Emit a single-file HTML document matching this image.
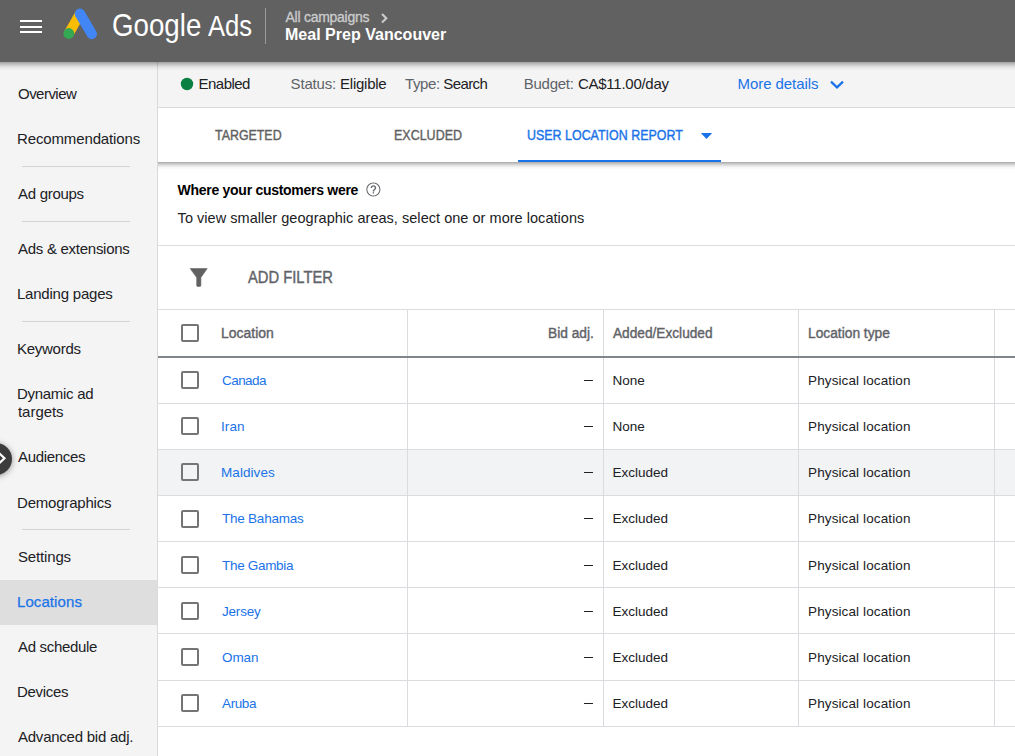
<!DOCTYPE html>
<html>
<head>
<meta charset="utf-8">
<style>
html,body{margin:0;padding:0;width:1015px;height:756px;overflow:hidden;background:#fff;}
body{position:relative;font-family:"Liberation Sans",sans-serif;}
.t{position:absolute;white-space:nowrap;line-height:1;}
.abs{position:absolute;}
#side{left:0;top:62px;width:157px;height:694px;background:#f4f4f4;border-right:1px solid #dadada;}
.sdiv{position:absolute;left:22px;width:108px;height:1px;background:#d4d4d4;}
#status{left:158px;top:62px;width:857px;height:45px;background:#f4f4f4;border-bottom:1px solid #dadada;}
#tabs{left:158px;top:108px;width:857px;height:54px;background:#fff;}
#tabshadow{left:158px;top:162px;width:857px;height:8px;background:linear-gradient(#a6a6a6 0,#c4c4c4 1.5px,#e2e2e2 3.5px,#f6f6f6 5.5px,#fff 8px);}
#header{left:0;top:0;width:1015px;height:62px;background:#616161;z-index:5;}
#hshadow{left:-30px;top:0;width:1075px;height:62px;background:#616161;box-shadow:0 2px 6px rgba(0,0,0,.45);z-index:5;}
.hline{position:absolute;height:1px;background:#dadce0;}
.vline{position:absolute;width:1px;background:#dadce0;}
.cb{position:absolute;left:181px;width:14px;height:14px;border:2px solid #757575;border-radius:2px;}
</style>
</head>
<body>
<!-- sidebar -->
<div id="side" class="abs">
  <div class="abs" style="left:0;top:518px;width:157px;height:45px;background:#dedede"></div>
  <div class="sdiv" style="top:104px"></div>
  <div class="sdiv" style="top:159px"></div>
  <div class="sdiv" style="top:259px"></div>
  <div class="sdiv" style="top:467px"></div>
</div>
<!-- status bar -->
<div id="status" class="abs"></div>
<svg class="abs" style="left:180px;top:77px" width="14" height="14"><circle cx="7" cy="7" r="6.2" fill="#0b8043"/></svg>
<svg class="abs" style="left:826px;top:77px" width="22" height="14"><path d="M5 4.6 L11 10.4 L17 4.6" fill="none" stroke="#1a73e8" stroke-width="2.2"/></svg>
<!-- tabs -->
<div id="tabs" class="abs"></div>
<div id="tabshadow" class="abs"></div>
<div class="abs" style="left:518px;top:160px;width:203px;height:2px;background:#1a73e8"></div>
<svg class="abs" style="left:699px;top:131px" width="14" height="10"><path d="M1.8 2 L13.2 2 L7.5 8 Z" fill="#1a73e8"/></svg>
<!-- section -->
<svg class="abs" style="left:364.6px;top:180.5px" width="17" height="17" viewBox="0 0 24.3 24.3"><g transform="scale(1)"><path fill="#5f6368" d="M11 18h2v-2h-2v2zm1-16C6.48 2 2 6.48 2 12s4.48 10 10 10 10-4.48 10-10S17.520 2 12 2zm0 18.6c-4.75 0-8.6-3.85-8.6-8.6s3.85-8.6 8.6-8.6 8.6 3.85 8.6 8.6-3.85 8.6-8.6 8.6zm0-14.6c-2.21 0-4 1.79-4 4h2c0-1.1.9-2 2-2s2 .9 2 2c0 2-3 1.750-3 5h2c0-2.25 3-2.5 3-5 0-2.21-1.79-4-4-4z"/></g></svg>
<div class="hline" style="left:158px;top:245px;width:857px"></div>
<svg class="abs" style="left:188px;top:266px" width="22" height="22"><path d="M2.2 2.6 L19.2 2.6 L12.9 11.6 L12.9 19.4 Q12.9 20.4 11.9 20.4 L9.7 20.4 Q8.7 20.4 8.7 19.4 L8.7 11.6 Z" fill="#616161" stroke="#616161" stroke-width="0.6" stroke-linejoin="round"/></svg>
<div class="hline" style="left:158px;top:309px;width:857px"></div>
<!-- table -->
<div class="abs" style="left:158px;top:356px;width:857px;height:2px;background:#80868b"></div>
<div class="abs" style="left:158px;top:450px;width:857px;height:45px;background:#f1f3f4"></div>
<div class="hline" style="left:158px;top:403px;width:857px"></div>
<div class="hline" style="left:158px;top:449px;width:857px"></div>
<div class="hline" style="left:158px;top:495px;width:857px"></div>
<div class="hline" style="left:158px;top:541px;width:857px"></div>
<div class="hline" style="left:158px;top:587px;width:857px"></div>
<div class="hline" style="left:158px;top:633px;width:857px"></div>
<div class="hline" style="left:158px;top:680px;width:857px"></div>
<div class="hline" style="left:158px;top:726px;width:857px"></div>
<div class="vline" style="left:407px;top:310px;height:46px"></div>
<div class="vline" style="left:603px;top:310px;height:46px"></div>
<div class="vline" style="left:798px;top:310px;height:46px"></div>
<div class="vline" style="left:994px;top:310px;height:46px"></div>
<div class="vline" style="left:407px;top:358px;height:368px"></div>
<div class="vline" style="left:603px;top:358px;height:368px"></div>
<div class="vline" style="left:798px;top:358px;height:368px"></div>
<div class="vline" style="left:994px;top:358px;height:368px"></div>
<div class="cb" style="top:324px"></div>
<div class="cb" style="top:371px"></div>
<div class="cb" style="top:417px"></div>
<div class="cb" style="top:463px"></div>
<div class="cb" style="top:510px"></div>
<div class="cb" style="top:556px"></div>
<div class="cb" style="top:602px"></div>
<div class="cb" style="top:648px"></div>
<div class="cb" style="top:694px"></div>
<div class="abs" style="left:583.5px;top:380px;width:9.5px;height:1px;background:#202124"></div>
<div class="abs" style="left:583.5px;top:426px;width:9.5px;height:1px;background:#202124"></div>
<div class="abs" style="left:583.5px;top:472px;width:9.5px;height:1px;background:#202124"></div>
<div class="abs" style="left:583.5px;top:518px;width:9.5px;height:1px;background:#202124"></div>
<div class="abs" style="left:583.5px;top:565px;width:9.5px;height:1px;background:#202124"></div>
<div class="abs" style="left:583.5px;top:611px;width:9.5px;height:1px;background:#202124"></div>
<div class="abs" style="left:583.5px;top:657px;width:9.5px;height:1px;background:#202124"></div>
<div class="abs" style="left:583.5px;top:703px;width:9.5px;height:1px;background:#202124"></div>
<!-- header -->
<div id="hshadow" class="abs"></div>
<div id="header" class="abs">
  <div class="abs" style="left:20px;top:20px;width:22px;height:2px;background:#fff"></div>
  <div class="abs" style="left:20px;top:25.5px;width:22px;height:2px;background:#fff"></div>
  <div class="abs" style="left:20px;top:31px;width:22px;height:2px;background:#fff"></div>
  <svg class="abs" style="left:58px;top:4px" width="42" height="42">
    <line x1="22" y1="9.8" x2="10.8" y2="29.5" stroke="#fbbc04" stroke-width="10" stroke-linecap="butt"/>
    <line x1="22" y1="9.8" x2="33.8" y2="30" stroke="#4285f4" stroke-width="10.4" stroke-linecap="round"/>
    <circle cx="10.8" cy="29.5" r="5.4" fill="#34a853"/>
  </svg>
  <div class="abs" style="left:265px;top:8px;width:1px;height:36px;background:#9a9a9a"></div>
  <svg class="abs" style="left:378px;top:11px" width="12" height="14"><path d="M4 3 L8.3 7.2 L4 11.4" fill="none" stroke="#cccccc" stroke-width="2.1"/></svg>
</div>
<!-- Audiences float -->
<div class="abs" style="left:-20px;top:442.5px;width:32px;height:32px;border-radius:50%;background:#3c3c3c;box-shadow:0 1px 6px rgba(0,0,0,.4);z-index:4"></div>
<svg class="abs" style="left:0;top:450px;z-index:6" width="10" height="16"><path d="M-1 3 L4.5 8.2 L-1 13.4" fill="none" stroke="#fff" stroke-width="2.2"/></svg>
<div style="position:absolute;left:0;top:0;z-index:10">
<span class="t" style="left:112.09px;top:9.50px;font-size:30.5px;font-weight:400;color:#ffffff;letter-spacing:0.000px;transform:scaleX(0.9078);transform-origin:0 0;">Google</span>
<span class="t" style="left:207.50px;top:10.50px;font-size:29.5px;font-weight:400;color:#ffffff;letter-spacing:0.000px;transform:scaleX(0.8686);transform-origin:0 0;">Ads</span>
<span class="t" style="left:285.50px;top:9.60px;font-size:14px;font-weight:400;color:#cccccc;letter-spacing:-0.263px;-webkit-text-stroke:0.3px #cccccc;">All campaigns</span>
<span class="t" style="left:285.00px;top:26.70px;font-size:16px;font-weight:700;color:#ffffff;letter-spacing:0.015px;">Meal Prep Vancouver</span>
<span class="t" style="left:18.00px;top:86.00px;font-size:15px;font-weight:400;color:#202124;letter-spacing:-0.526px;">Overview</span>
<span class="t" style="left:17.00px;top:131.00px;font-size:15px;font-weight:400;color:#202124;letter-spacing:-0.133px;">Recommendations</span>
<span class="t" style="left:18.00px;top:186.00px;font-size:15px;font-weight:400;color:#202124;letter-spacing:-0.285px;">Ad groups</span>
<span class="t" style="left:18.00px;top:241.00px;font-size:15px;font-weight:400;color:#202124;letter-spacing:-0.273px;">Ads &amp; extensions</span>
<span class="t" style="left:17.00px;top:286.00px;font-size:15px;font-weight:400;color:#202124;letter-spacing:-0.219px;">Landing pages</span>
<span class="t" style="left:17.00px;top:341.00px;font-size:15px;font-weight:400;color:#202124;letter-spacing:-0.266px;">Keywords</span>
<span class="t" style="left:17.00px;top:386.00px;font-size:15px;font-weight:400;color:#202124;letter-spacing:-0.295px;">Dynamic ad</span>
<span class="t" style="left:18.00px;top:404.00px;font-size:15px;font-weight:400;color:#202124;letter-spacing:-0.043px;">targets</span>
<span class="t" style="left:18.00px;top:449.00px;font-size:15px;font-weight:400;color:#202124;letter-spacing:-0.306px;">Audiences</span>
<span class="t" style="left:17.00px;top:494.50px;font-size:15px;font-weight:400;color:#202124;letter-spacing:-0.201px;">Demographics</span>
<span class="t" style="left:18.00px;top:549.00px;font-size:15px;font-weight:400;color:#202124;letter-spacing:-0.157px;">Settings</span>
<span class="t" style="left:17.00px;top:593.60px;font-size:15px;font-weight:400;color:#1a73e8;letter-spacing:0.086px;-webkit-text-stroke:0.25px #1a73e8;">Locations</span>
<span class="t" style="left:18.00px;top:639.00px;font-size:15px;font-weight:400;color:#202124;letter-spacing:-0.312px;">Ad schedule</span>
<span class="t" style="left:17.00px;top:684.00px;font-size:15px;font-weight:400;color:#202124;letter-spacing:-0.308px;">Devices</span>
<span class="t" style="left:18.00px;top:728.50px;font-size:15px;font-weight:400;color:#202124;letter-spacing:-0.237px;">Advanced bid adj.</span>
<span class="t" style="left:198.60px;top:76.00px;font-size:15px;font-weight:400;color:#202124;letter-spacing:-0.551px;">Enabled</span>
<span class="t" style="left:290.60px;top:76.00px;font-size:15px;font-weight:400;color:#5f6368;letter-spacing:-0.187px;">Status:</span>
<span class="t" style="left:340.10px;top:76.00px;font-size:15px;font-weight:400;color:#202124;letter-spacing:-0.260px;">Eligible</span>
<span class="t" style="left:405.00px;top:76.00px;font-size:15px;font-weight:400;color:#5f6368;letter-spacing:-0.380px;">Type:</span>
<span class="t" style="left:443.30px;top:76.00px;font-size:15px;font-weight:400;color:#202124;letter-spacing:-0.597px;">Search</span>
<span class="t" style="left:523.70px;top:76.00px;font-size:15px;font-weight:400;color:#5f6368;letter-spacing:-0.240px;">Budget:</span>
<span class="t" style="left:578.00px;top:76.00px;font-size:15px;font-weight:400;color:#202124;letter-spacing:-0.269px;">CA$11.00/day</span>
<span class="t" style="left:737.50px;top:76.00px;font-size:15px;font-weight:400;color:#1a73e8;letter-spacing:-0.064px;">More details</span>
<span class="t" style="left:215.10px;top:128.00px;font-size:14px;font-weight:400;color:#616161;letter-spacing:0.000px;transform:scaleX(0.8857);transform-origin:0 0;-webkit-text-stroke:0.4px #616161;">TARGETED</span>
<span class="t" style="left:393.71px;top:128.00px;font-size:14px;font-weight:400;color:#616161;letter-spacing:0.000px;transform:scaleX(0.8918);transform-origin:0 0;-webkit-text-stroke:0.4px #616161;">EXCLUDED</span>
<span class="t" style="left:526.81px;top:128.00px;font-size:14px;font-weight:400;color:#1a73e8;letter-spacing:0.000px;transform:scaleX(0.8888);transform-origin:0 0;-webkit-text-stroke:0.4px #1a73e8;">USER LOCATION REPORT</span>
<span class="t" style="left:177.60px;top:183.00px;font-size:14px;font-weight:700;color:#000000;letter-spacing:-0.280px;">Where your customers were</span>
<span class="t" style="left:177.60px;top:210.70px;font-size:14.5px;font-weight:400;color:#202124;letter-spacing:0.034px;">To view smaller geographic areas, select one or more locations</span>
<span class="t" style="left:247.80px;top:269.60px;font-size:16px;font-weight:400;color:#5f6368;letter-spacing:0.000px;transform:scaleX(0.9214);transform-origin:0 0;-webkit-text-stroke:0.4px #5f6368;">ADD FILTER</span>
<span class="t" style="left:221.00px;top:326.00px;font-size:14px;font-weight:400;color:#5f6368;letter-spacing:0.000px;transform:scaleX(0.9972);transform-origin:0 0;-webkit-text-stroke:0.4px #5f6368;">Location</span>
<span class="t" style="left:548.02px;top:326.00px;font-size:14px;font-weight:400;color:#5f6368;letter-spacing:0.000px;transform:scaleX(0.9820);transform-origin:0 0;-webkit-text-stroke:0.4px #5f6368;">Bid adj.</span>
<span class="t" style="left:613.20px;top:326.00px;font-size:14px;font-weight:400;color:#5f6368;letter-spacing:0.000px;transform:scaleX(0.9765);transform-origin:0 0;-webkit-text-stroke:0.4px #5f6368;">Added/Excluded</span>
<span class="t" style="left:807.92px;top:326.00px;font-size:14px;font-weight:400;color:#5f6368;letter-spacing:0.000px;transform:scaleX(0.9831);transform-origin:0 0;-webkit-text-stroke:0.4px #5f6368;">Location type</span>
<span class="t" style="left:222.00px;top:374.00px;font-size:13.5px;font-weight:400;color:#1a73e8;letter-spacing:-0.556px;">Canada</span>
<span class="t" style="left:612.50px;top:374.00px;font-size:13.5px;font-weight:400;color:#202124;letter-spacing:0.012px;">None</span>
<span class="t" style="left:808.00px;top:374.00px;font-size:13.5px;font-weight:400;color:#202124;letter-spacing:0.122px;">Physical location</span>
<span class="t" style="left:221.00px;top:420.15px;font-size:13.5px;font-weight:400;color:#1a73e8;letter-spacing:0.082px;">Iran</span>
<span class="t" style="left:612.50px;top:420.15px;font-size:13.5px;font-weight:400;color:#202124;letter-spacing:0.012px;">None</span>
<span class="t" style="left:808.00px;top:420.15px;font-size:13.5px;font-weight:400;color:#202124;letter-spacing:0.122px;">Physical location</span>
<span class="t" style="left:221.00px;top:466.30px;font-size:13.5px;font-weight:400;color:#1a73e8;letter-spacing:0.069px;">Maldives</span>
<span class="t" style="left:612.50px;top:466.30px;font-size:13.5px;font-weight:400;color:#202124;letter-spacing:-0.004px;">Excluded</span>
<span class="t" style="left:808.00px;top:466.30px;font-size:13.5px;font-weight:400;color:#202124;letter-spacing:0.122px;">Physical location</span>
<span class="t" style="left:222.00px;top:512.45px;font-size:13.5px;font-weight:400;color:#1a73e8;letter-spacing:-0.230px;">The Bahamas</span>
<span class="t" style="left:612.50px;top:512.45px;font-size:13.5px;font-weight:400;color:#202124;letter-spacing:-0.004px;">Excluded</span>
<span class="t" style="left:808.00px;top:512.45px;font-size:13.5px;font-weight:400;color:#202124;letter-spacing:0.122px;">Physical location</span>
<span class="t" style="left:222.00px;top:558.60px;font-size:13.5px;font-weight:400;color:#1a73e8;letter-spacing:-0.308px;">The Gambia</span>
<span class="t" style="left:612.50px;top:558.60px;font-size:13.5px;font-weight:400;color:#202124;letter-spacing:-0.004px;">Excluded</span>
<span class="t" style="left:808.00px;top:558.60px;font-size:13.5px;font-weight:400;color:#202124;letter-spacing:0.122px;">Physical location</span>
<span class="t" style="left:222.00px;top:604.75px;font-size:13.5px;font-weight:400;color:#1a73e8;letter-spacing:-0.202px;">Jersey</span>
<span class="t" style="left:612.50px;top:604.75px;font-size:13.5px;font-weight:400;color:#202124;letter-spacing:-0.004px;">Excluded</span>
<span class="t" style="left:808.00px;top:604.75px;font-size:13.5px;font-weight:400;color:#202124;letter-spacing:0.122px;">Physical location</span>
<span class="t" style="left:222.00px;top:650.90px;font-size:13.5px;font-weight:400;color:#1a73e8;letter-spacing:-0.085px;">Oman</span>
<span class="t" style="left:612.50px;top:650.90px;font-size:13.5px;font-weight:400;color:#202124;letter-spacing:-0.004px;">Excluded</span>
<span class="t" style="left:808.00px;top:650.90px;font-size:13.5px;font-weight:400;color:#202124;letter-spacing:0.122px;">Physical location</span>
<span class="t" style="left:222.00px;top:697.05px;font-size:13.5px;font-weight:400;color:#1a73e8;letter-spacing:-0.379px;">Aruba</span>
<span class="t" style="left:612.50px;top:697.05px;font-size:13.5px;font-weight:400;color:#202124;letter-spacing:-0.004px;">Excluded</span>
<span class="t" style="left:808.00px;top:697.05px;font-size:13.5px;font-weight:400;color:#202124;letter-spacing:0.122px;">Physical location</span>
</div>
</body>
</html>
